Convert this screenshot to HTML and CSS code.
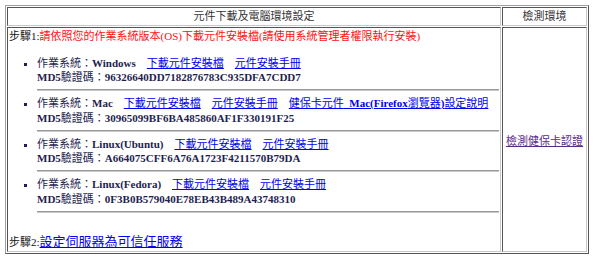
FILE: index.html
```html
<html>
    <head>
        <title>元件下載及電腦環境設定</title>
        <link rel="stylesheet" href="styles.css">
    </head>
    <body>
        <table class="env">
            <tr>
                <th class="head-main">元件下載及電腦環境設定</th>
                <th class="head-side">檢測環境</th>
            </tr>
            <tr>
                <td class="main">
                    <div class="step">步驟1:<span class="warn">請依照您的作業系統版本(OS)下載元件安裝檔(請使用系統管理者權限執行安裝)</span></div>

                    <ul class="os-list">
                        <li>
                            <div>作業系統：<b>Windows</b><a href="#">下載元件安裝檔</a><a href="#">元件安裝手冊</a></div>
                            <div><b>MD5</b>驗證碼：<b>96326640DD7182876783C935DFA7CDD7</b></div>
                            <hr>
                        </li>
                        <li>
                            <div>作業系統：<b>Mac</b><a href="#">下載元件安裝檔</a><a href="#">元件安裝手冊</a><a href="#">健保卡元件<b>_Mac(Firefox</b>瀏覽器<b>)</b>設定說明</a></div>
                            <div><b>MD5</b>驗證碼：<b>30965099BF6BA485860AF1F330191F25</b></div>
                            <hr>
                        </li>
                        <li>
                            <div>作業系統：<b>Linux(Ubuntu)</b><a href="#">下載元件安裝檔</a><a href="#">元件安裝手冊</a></div>
                            <div><b>MD5</b>驗證碼：<b>A664075CFF6A76A1723F4211570B79DA</b></div>
                            <hr>
                        </li>
                        <li>
                            <div>作業系統：<b>Linux(Fedora)</b><a href="#">下載元件安裝檔</a><a href="#">元件安裝手冊</a></div>
                            <div><b>MD5</b>驗證碼：<b>0F3B0B579040E78EB43B489A43748310</b></div>
                            <hr>
                        </li>
                    </ul>

                    <div class="step2">步驟2:<a class="big" href="#">設定伺服器為可信任服務</a></div>
                </td>
                <td class="side"><a class="visited" href="#">檢測健保卡認證</a></td>
            </tr>
        </table>
    </body>
</html>
```

FILE: styles.css
```css
* {
    font-family: 'Liberation Serif', 'Noto Sans CJK TC', serif;
}

body {
    margin: 5px;
    background: #fff;
    color: #111;
    font-size: 11px;
}

.env {
    width: 584px;
    table-layout: fixed;
    border-collapse: separate;
    border-spacing: 1px;
    border: 1px solid;
    border-color: #a0a0a0 #555 #555 #a0a0a0;
}

.env th,
.env td {
    padding: 1px;
    border: 1px solid;
    border-color: #555 #c8c8c8 #c8c8c8 #555;
    font-size: 11px;
}

.env th {
    font-weight: normal;
    color: #333;
    line-height: 15px;
    text-align: center;
}

.head-side {
    width: 81px;
}

.main {
    vertical-align: top;
}

.side {
    vertical-align: middle;
    text-align: center;
}

.step {
    line-height: 15px;
}

.warn {
    color: #ff1010;
}

.os-list {
    margin: 11.5px 0 21.5px 0;
    padding-left: 28px;
    list-style: square;
    color: #1e1e50;
}

.os-list li {
    line-height: 14.5px;
}

.os-list a {
    margin-left: 11px;
}

.os-list hr {
    margin: 4.5px 0 5px 0;
    height: 0;
    border: none;
    border-top: 1px solid #999;
    border-bottom: 1px solid #c8c8c8;
}

a {
    color: #0000ee;
}

a.visited {
    color: #5a2a8a;
}

.step2 {
    line-height: 16px;
}

.big {
    font-size: 13px;
}
```
